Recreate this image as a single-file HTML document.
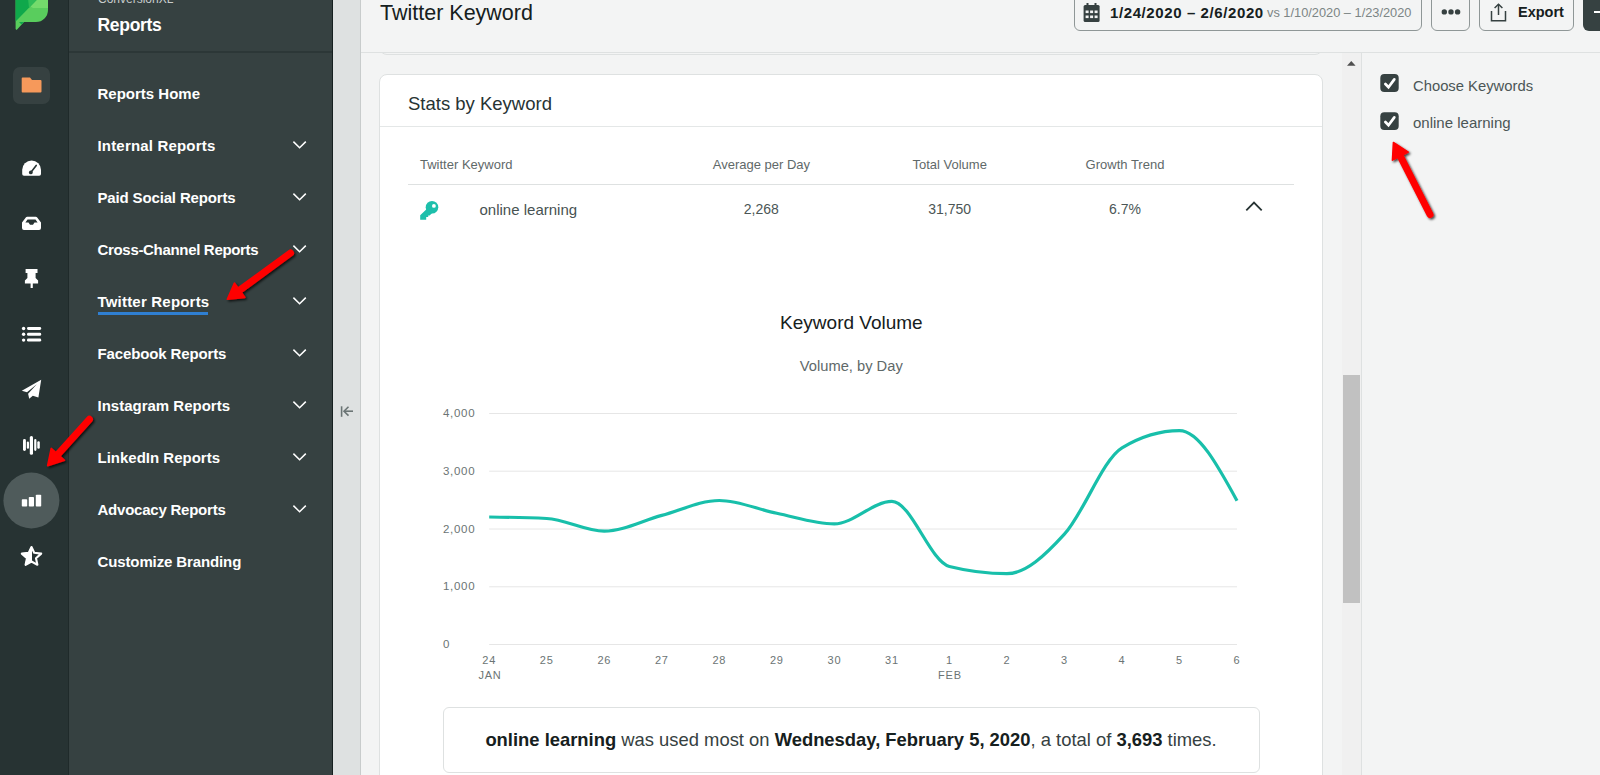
<!DOCTYPE html>
<html><head><meta charset="utf-8">
<style>
*{box-sizing:border-box;margin:0;padding:0}
html,body{width:1600px;height:775px;overflow:hidden;background:#f3f4f4;font-family:"Liberation Sans",sans-serif}
.a{position:absolute}
.t{position:absolute;line-height:1;white-space:nowrap}
.c{transform:translateX(-50%)}
#rail{left:0;top:0;width:69px;height:775px;background:#273333;border-right:1px solid #1f2a2a}
#nav{left:69px;top:0;width:264px;height:775px;background:#364141;border-right:1px solid #162020}
#strip{left:333px;top:0;width:28px;height:775px;background:#dee1e1;border-right:1px solid #c8cccc}
.nv{left:97.5px;color:#fff;font-size:15px;font-weight:700}
.th{font-size:13px;color:#5f6969}
.td{font-size:14px;color:#4b5656}
.yl{left:443px;font-size:11.5px;color:#6b7474;letter-spacing:0.7px}
.xl{font-size:11px;color:#6b7474;letter-spacing:0.8px}
</style></head><body>
<div id="rail" class="a"></div>
<div id="nav" class="a"></div>
<div id="strip" class="a"></div>

<!-- RAIL ICONS -->
<svg class="a" style="left:0;top:0" width="69" height="775" viewBox="0 0 69 775">
  <!-- logo -->
  <path d="M15.6 -2 H48 V10 A12 12 0 0 1 36 22 H24 L16.6 30 L15.6 29 Z" fill="#59cd5d"/>
  <path d="M15.6 -2 H48 V8 H37 L33 8 Z" fill="#74db6c"/>
  <path d="M15.6 -2 H38.5 L15.6 21.5 Z" fill="#0fa84b"/>
  <path d="M28 -2 H38.5 L29 8 Z" fill="#2fbc57"/>
  <path d="M19 22 L24 22 L21.5 24.5 Z" fill="#0fa84b"/>
  <!-- folder button -->
  <rect x="13" y="67" width="37" height="37" rx="7" fill="#364141"/>
  <path d="M22.5 77.5 H30 L32 80 H40.5 Q41.5 80 41.5 81 V91.5 Q41.5 92.5 40.5 92.5 H22.5 Q21.7 92.5 21.7 91.5 V78.5 Q21.7 77.5 22.5 77.5 Z" fill="#f6995b"/>
  <!-- gauge -->
  <path d="M22.2 174 V169.8 A9.4 9.4 0 0 1 41 169.8 V174 Q41 175.8 39.2 175.8 H24 Q22.2 175.8 22.2 174 Z" fill="#fff"/>
  <path d="M31 172.2 L36.2 165.4" stroke="#273333" stroke-width="1.6" stroke-linecap="round"/>
  <circle cx="30.8" cy="172.4" r="1.9" fill="#273333"/>
  <!-- inbox -->
  <path d="M27.2 216.7 H35.8 Q36.6 216.7 37.2 217.5 L41 222.5 V228 Q41 230 39 230 H24 Q22 230 22 228 V222.5 L25.8 217.5 Q26.4 216.7 27.2 216.7 Z" fill="#fff"/>
  <path d="M27.5 219.6 H35.5 L37.6 222.6 H34.5 L33 224.8 H30 L28.5 222.6 H25.4 Z" fill="#273333"/>
  <!-- pin -->
  <path d="M25.6 269 H37.5 V273 H35.6 V278 L38.1 280.5 V283.6 H32.8 V288 H30.6 V283.6 H24.9 V280.5 L27.4 278 V273 H25.6 Z" fill="#fff"/>
  <!-- list -->
  <circle cx="23.6" cy="328.5" r="1.7" fill="#fff"/><circle cx="23.6" cy="334.3" r="1.7" fill="#fff"/><circle cx="23.6" cy="340.1" r="1.7" fill="#fff"/>
  <rect x="27" y="327" width="14.2" height="3" rx="1.4" fill="#fff"/><rect x="27" y="332.8" width="14.2" height="3" rx="1.4" fill="#fff"/><rect x="27" y="338.6" width="14.2" height="3" rx="1.4" fill="#fff"/>
  <!-- plane -->
  <path d="M41.2 379.8 L38.4 397.6 L32.8 395.8 L29.2 398.8 L28.1 393.8 L36.8 384.2 L27 392.2 L21.8 390.8 Z" fill="#fff"/>
  <!-- waves -->
  <rect x="23" y="439" width="2.9" height="11.9" rx="1.4" fill="#fff"/>
  <rect x="26.8" y="441.4" width="2.2" height="7.4" rx="1.1" fill="#fff"/>
  <rect x="29.8" y="436" width="3.2" height="18.8" rx="1.5" fill="#fff"/>
  <rect x="34.2" y="439" width="2.2" height="11.9" rx="1.1" fill="#fff"/>
  <rect x="37.3" y="441.2" width="2.5" height="7.6" rx="1.2" fill="#fff"/>
  <!-- active circle -->
  <circle cx="31.4" cy="500.5" r="28" fill="#4f5b5b"/>
  <rect x="21.8" y="499.3" width="5.4" height="7.2" rx="0.8" fill="#fff"/>
  <rect x="28.8" y="497" width="5.2" height="9.5" rx="0.8" fill="#fff"/>
  <rect x="35.8" y="494.7" width="5.4" height="11.8" rx="0.8" fill="#fff"/>
  <!-- star -->
  <path d="M31.5 547 L34.2 552.8 L41.2 553.6 L36 558.2 L37.4 564.8 L31.5 561.5 L25.6 564.8 L27 558.2 L21.8 553.6 L28.8 552.8 Z" fill="none" stroke="#fff" stroke-width="2.1" stroke-linejoin="round"/>
  <path d="M31.5 547 L28.8 552.8 L21.8 553.6 L27 558.2 L25.6 564.8 L31.5 561.5 Z" fill="#fff" stroke="#fff" stroke-width="1" stroke-linejoin="round"/>
</svg>

<!-- NAV -->
<div class="t" style="left:98px;top:-7px;font-size:12px;color:#c8cccc">ConversionXL</div>
<div class="t" style="left:97.5px;top:16.5px;font-size:17.5px;font-weight:700;color:#fff;letter-spacing:-0.3px">Reports</div>
<div class="a" style="left:69px;top:51px;width:263px;height:2px;background:#2c3737"></div>

<div class="t nv" style="top:86px">Reports Home</div>
<div class="t nv" style="top:138px;letter-spacing:0.18px">Internal Reports</div>
<div class="t nv" style="top:190px;letter-spacing:-0.15px">Paid Social Reports</div>
<div class="t nv" style="top:242px;letter-spacing:-0.32px">Cross-Channel Reports</div>
<div class="t nv" style="top:294px;letter-spacing:0.2px">Twitter Reports</div>
<div class="a" style="left:98px;top:312px;width:110px;height:2.5px;background:#2f7fd2"></div>
<div class="t nv" style="top:346px;letter-spacing:-0.13px">Facebook Reports</div>
<div class="t nv" style="top:398px">Instagram Reports</div>
<div class="t nv" style="top:450px">LinkedIn Reports</div>
<div class="t nv" style="top:502px;letter-spacing:-0.23px">Advocacy Reports</div>
<div class="t nv" style="top:554px;letter-spacing:-0.12px">Customize Branding</div>
<svg class="a" style="left:280px;top:0" width="40" height="600" viewBox="280 0 40 600">
  <g fill="none" stroke="#fff" stroke-width="1.5">
    <path d="M293.4 141.6 L299.6 147.8 L305.8 141.6"/>
    <path d="M293.4 193.6 L299.6 199.8 L305.8 193.6"/>
    <path d="M293.4 245.6 L299.6 251.8 L305.8 245.6"/>
    <path d="M293.4 297.6 L299.6 303.8 L305.8 297.6"/>
    <path d="M293.4 349.6 L299.6 355.8 L305.8 349.6"/>
    <path d="M293.4 401.6 L299.6 407.8 L305.8 401.6"/>
    <path d="M293.4 453.6 L299.6 459.8 L305.8 453.6"/>
    <path d="M293.4 505.6 L299.6 511.8 L305.8 505.6"/>
  </g>
</svg>
<!-- collapse icon -->
<svg class="a" style="left:333px;top:395px" width="28" height="30" viewBox="333 395 28 30">
  <g stroke="#6b7575" stroke-width="1.6" fill="none">
    <path d="M341.6 406.3 V416.8"/>
    <path d="M344 411.2 H353"/>
    <path d="M348.5 406.8 L344 411.2 L348.5 415.6"/>
  </g>
</svg>

<!-- MAIN HEADER -->
<div class="a" style="left:379px;top:-30px;width:944px;height:85px;border:1px solid #dee1e1;border-radius:8px;background:#f3f4f4"></div>
<div class="a" style="left:361px;top:0;width:1239px;height:52px;background:#f3f4f4"></div>
<div class="a" style="left:361px;top:52px;width:1239px;height:1px;background:#dee1e1"></div>
<div class="t" style="left:380px;top:3px;font-size:21.5px;color:#162020">Twitter Keyword</div>

<div class="a" style="left:1074px;top:-8px;width:348px;height:39px;border:1px solid #8f9797;border-radius:6px"></div>
<svg class="a" style="left:1083px;top:2px" width="18" height="20" viewBox="0 0 18 20">
  <rect x="0.6" y="3" width="16" height="17" rx="1.5" fill="#364141"/>
  <rect x="3.5" y="1" width="2" height="4" fill="#364141"/><rect x="11.5" y="1" width="2" height="4" fill="#364141"/>
  <g fill="#f3f4f4">
    <rect x="2.6" y="8.5" width="3" height="2.6"/><rect x="7.1" y="8.5" width="3" height="2.6"/><rect x="11.6" y="8.5" width="3" height="2.6"/>
    <rect x="2.6" y="13.5" width="3" height="2.6"/><rect x="7.1" y="13.5" width="3" height="2.6"/><rect x="11.6" y="13.5" width="3" height="2.6"/>
  </g>
</svg>
<div class="t" style="left:1110px;top:5px;font-size:15px;font-weight:700;color:#162020;letter-spacing:0.6px">1/24/2020 – 2/6/2020</div>
<div class="t" style="left:1267px;top:7px;font-size:12.8px;color:#7c8585">vs 1/10/2020 – 1/23/2020</div>

<div class="a" style="left:1431px;top:-8px;width:39px;height:39px;border:1px solid #8f9797;border-radius:6px"></div>
<svg class="a" style="left:1440px;top:8px" width="22" height="8" viewBox="0 0 22 8">
  <circle cx="4.3" cy="3.9" r="2.7" fill="#364141"/><circle cx="11" cy="3.9" r="2.7" fill="#364141"/><circle cx="17.6" cy="3.9" r="2.7" fill="#364141"/>
</svg>
<div class="a" style="left:1479px;top:-8px;width:95px;height:39px;border:1px solid #8f9797;border-radius:6px"></div>
<svg class="a" style="left:1489px;top:2px" width="19" height="20" viewBox="0 0 19 20">
  <g fill="none" stroke="#364141" stroke-width="1.5">
    <path d="M2.5 9 V18.7 H16.5 V9"/>
    <path d="M9.5 2.2 V13"/>
    <path d="M5.6 6 L9.5 2.2 L13.4 6"/>
  </g>
</svg>
<div class="t" style="left:1518px;top:5px;font-size:14.5px;font-weight:700;color:#162020">Export</div>
<div class="a" style="left:1583px;top:-8px;width:40px;height:39px;background:#364141;border-radius:6px"></div>
<div class="a" style="left:1594px;top:11px;width:6px;height:2px;background:#fff"></div>

<!-- CARD -->
<div class="a" style="left:379px;top:74px;width:944px;height:760px;background:#fff;border:1px solid #dee1e1;border-radius:8px"></div>
<div class="t" style="left:408px;top:95px;font-size:18.5px;color:#273333">Stats by Keyword</div>
<div class="a" style="left:380px;top:126px;width:942px;height:1px;background:#e4e7e7"></div>

<div class="t th" style="left:420px;top:158px">Twitter Keyword</div>
<div class="t th c" style="left:761.4px;top:158px">Average per Day</div>
<div class="t th c" style="left:949.7px;top:158px">Total Volume</div>
<div class="t th c" style="left:1125px;top:158px">Growth Trend</div>
<div class="a" style="left:408px;top:184px;width:886px;height:1px;background:#dee1e1"></div>

<svg class="a" style="left:414px;top:196px" width="30" height="30" viewBox="0 0 30 30">
  <circle cx="18" cy="11.3" r="6.3" fill="#1dbfab"/>
  <path d="M6.2 19.2 L13 12.8 L18.2 17 L15.6 19.6 L14.2 19.6 L14.2 21 L12.2 21 L12.2 23.7 L6.2 23.7 Z" fill="#1dbfab"/>
  <circle cx="19.9" cy="9.9" r="1.9" fill="#fff"/>
</svg>
<div class="t" style="left:479.5px;top:202px;font-size:15px;color:#475252">online learning</div>
<div class="t td c" style="left:761.3px;top:202px">2,268</div>
<div class="t td c" style="left:949.6px;top:202px">31,750</div>
<div class="t td c" style="left:1125px;top:202px">6.7%</div>
<svg class="a" style="left:1243px;top:198px" width="22" height="16" viewBox="1243 198 22 16">
  <path d="M1246.3 210.3 L1254 202.6 L1261.7 210.3" fill="none" stroke="#273333" stroke-width="1.8"/>
</svg>

<!-- CHART -->
<div class="t c" style="left:851.4px;top:313px;font-size:19px;color:#162020">Keyword Volume</div>
<div class="t c" style="left:851.3px;top:358.5px;font-size:14.7px;color:#5f6969">Volume, by Day</div>
<svg class="a" style="left:0;top:0" width="1600" height="775" viewBox="0 0 1600 775">
  <g stroke="#e6e6e6" stroke-width="1">
    <path d="M489.2 413.5 H1237"/><path d="M489.2 471.2 H1237"/><path d="M489.2 529 H1237"/><path d="M489.2 586.8 H1237"/><path d="M489.2 644.5 H1237"/>
  </g>
  <path d="M 489.2 517.0 C 508.4 517.2 527.5 517.5 546.7 518.5 C 565.9 519.5 585.1 531.2 604.2 531.2 C 623.4 531.2 642.6 520.5 661.8 515.4 C 680.9 510.3 700.1 500.5 719.3 500.5 C 738.5 500.5 757.6 509.4 776.8 513.3 C 796.0 517.2 815.2 523.9 834.3 523.9 C 853.5 523.9 872.7 501.4 891.9 501.4 C 911.0 501.4 930.2 561.7 949.4 566.5 C 968.6 571.3 987.7 573.7 1006.9 573.7 C 1026.1 573.7 1045.3 555.2 1064.4 534.2 C 1083.6 513.2 1102.8 459.3 1122.0 447.8 C 1141.1 436.3 1160.3 430.6 1179.5 430.6 C 1198.7 430.6 1217.8 465.6 1237.0 500.7" fill="none" stroke="#18bfaa" stroke-width="3.2" stroke-linejoin="round" stroke-linecap="butt"/>
</svg>
<div class="t yl" style="top:408px">4,000</div>
<div class="t yl" style="top:466px">3,000</div>
<div class="t yl" style="top:523.5px">2,000</div>
<div class="t yl" style="top:581px">1,000</div>
<div class="t yl" style="top:639px">0</div>

<div class="t xl c" style="left:489.2px;top:655px">24</div>
<div class="t xl c" style="left:546.7px;top:655px">25</div>
<div class="t xl c" style="left:604.3px;top:655px">26</div>
<div class="t xl c" style="left:661.8px;top:655px">27</div>
<div class="t xl c" style="left:719.3px;top:655px">28</div>
<div class="t xl c" style="left:776.8px;top:655px">29</div>
<div class="t xl c" style="left:834.4px;top:655px">30</div>
<div class="t xl c" style="left:891.9px;top:655px">31</div>
<div class="t xl c" style="left:949.4px;top:655px">1</div>
<div class="t xl c" style="left:1006.9px;top:655px">2</div>
<div class="t xl c" style="left:1064.4px;top:655px">3</div>
<div class="t xl c" style="left:1122px;top:655px">4</div>
<div class="t xl c" style="left:1179.5px;top:655px">5</div>
<div class="t xl c" style="left:1237px;top:655px">6</div>
<div class="t xl c" style="left:490px;top:670px">JAN</div>
<div class="t xl c" style="left:950px;top:670px">FEB</div>

<div class="a" style="left:443px;top:707px;width:817px;height:66px;border:1px solid #dee1e1;border-radius:6px"></div>
<div class="t c" style="left:851px;top:731px;font-size:18.4px;color:#364141"><b style="color:#162020">online learning</b> was used most on <b style="color:#162020">Wednesday, February 5, 2020</b>, a total of <b style="color:#162020">3,693</b> times.</div>

<!-- SCROLLBAR -->
<div class="a" style="left:1342px;top:53px;width:19px;height:722px;background:#f0f0f0"></div>
<div class="a" style="left:1343px;top:375px;width:16.5px;height:228px;background:#c1c1c1"></div>
<svg class="a" style="left:1342px;top:56px" width="19" height="14" viewBox="1342 56 19 14">
  <path d="M1347 65.8 L1351.3 61 L1355.6 65.8 Z" fill="#505050"/>
</svg>

<!-- RIGHT PANEL -->
<div class="a" style="left:1361px;top:53px;width:1px;height:722px;background:#dee1e1"></div>
<svg class="a" style="left:1378px;top:72px" width="24" height="62" viewBox="1378 72 24 62">
  <rect x="1380.3" y="74" width="18.4" height="18" rx="4" fill="#364141"/>
  <rect x="1380.3" y="112.2" width="18.4" height="17.8" rx="4" fill="#364141"/>
  <g fill="none" stroke="#fff" stroke-width="2.7" stroke-linecap="round" stroke-linejoin="miter">
    <path d="M1385.4 84 L1388.5 87.2 L1394.3 79.4"/>
    <path d="M1385.4 122 L1388.5 125.2 L1394.3 117.4"/>
  </g>
</svg>
<div class="t" style="left:1413px;top:78.5px;font-size:14.8px;color:#4b5656">Choose Keywords</div>
<div class="t" style="left:1413px;top:115px;font-size:15px;color:#4b5656">online learning</div>

<!-- RED ARROWS -->
<svg class="a" style="left:0;top:0" width="1600" height="775" viewBox="0 0 1600 775">
  <defs><filter id="sh" x="-20%" y="-20%" width="140%" height="140%"><feDropShadow dx="1.5" dy="1.5" stdDeviation="1.2" flood-color="#000" flood-opacity="0.75"/></filter></defs>
  <g filter="url(#sh)" fill="#ff0000" stroke="#ff0000">
    <path d="M227.3 299.2 L244.9 297.4 L234.4 283.0 Z" stroke-width="1.5" stroke-linejoin="round"/>
    <path d="M238.0 291.4 L290.5 253.0" stroke-width="7" stroke-linecap="round" fill="none"/>
    <path d="M47.6 465.7 L64.5 460.3 L51.2 448.4 Z" stroke-width="1.5" stroke-linejoin="round"/>
    <path d="M56.5 455.8 L89.4 419.3" stroke-width="7" stroke-linecap="round" fill="none"/>
    <path d="M1393.4 142.5 L1392.4 160.2 L1408.3 152.1 Z" stroke-width="1.5" stroke-linejoin="round"/>
    <path d="M1399.4 154.4 L1430.0 214.5" stroke-width="7" stroke-linecap="round" fill="none"/>
  </g>
</svg>
</body></html>
